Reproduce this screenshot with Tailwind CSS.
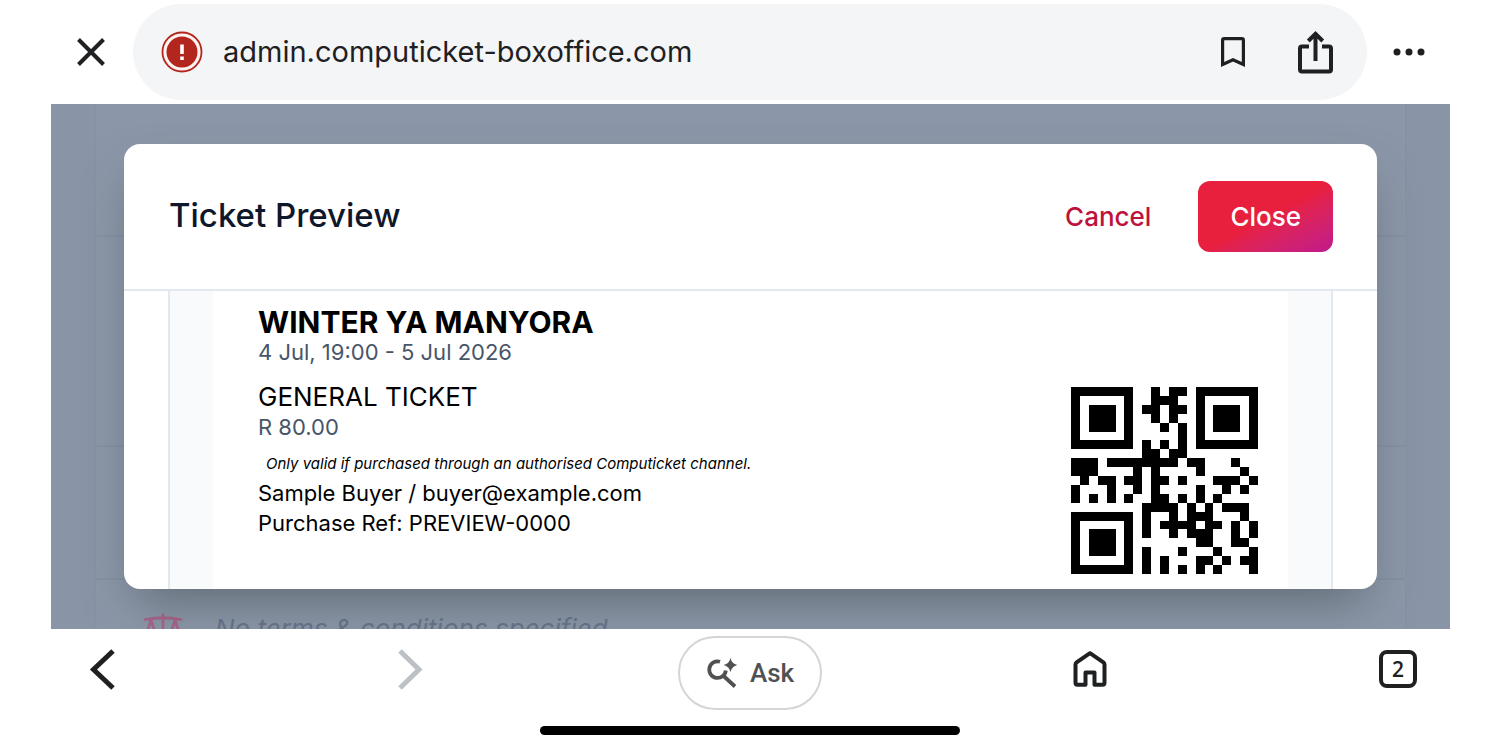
<!DOCTYPE html>
<html lang="en">

<head>
    <meta charset="UTF-8" />
    <meta name="viewport" content="width=device-width, initial-scale=1.0" />
    <title>Ticket Preview</title>
    <script src="https://cdn.jsdelivr.net/npm/@tailwindcss/browser@4"></script>
</head>
<body class="min-h-screen flex flex-col bg-white font-['Inter',sans-serif] text-[#1f2022]">

    <!-- Address bar -->
    <header class="flex items-center pt-1 pb-1 pl-[77px] pr-[75px]">
        <button aria-label="Close tab">
            <svg class="w-7 h-7" viewBox="0 0 28 28" fill="none" stroke="currentColor" stroke-width="4"><path d="M1.500 1.500L26.500 26.500M26.500 1.500L1.500 26.500" /></svg>
        </button>
        <div class="flex-1 flex items-center h-24 ml-7 mr-[26px] pl-7 pr-[34px] rounded-full bg-[#f4f5f7]">
            <button aria-label="Dangerous site">
                <svg class="w-[42px] h-[42px]" viewBox="0 0 42 42">
                    <circle cx="21" cy="21" r="19.500" fill="#fdf3f1" stroke="#b3261e" stroke-width="1.800" />
                    <circle cx="21" cy="21" r="15.500" fill="#b3261e" />
                    <path d="M19.200 13.500h3.600v9.500h-3.600zM19.200 25.500h3.600v3.500h-3.600z" fill="#fff" />
                </svg>
            </button>
            <button class="flex-1 ml-5 text-left text-[29px] leading-10">admin.computicket-boxoffice.com</button>
            <button aria-label="Bookmark">
                <svg class="w-[26px] h-8" viewBox="0 0 26 32" fill="none" stroke="currentColor" stroke-width="3.200"><path d="M2.600 28.500V4.200Q2.600 2.600 4.200 2.600H21.800Q23.400 2.600 23.400 4.200V28.500L13 23.800z" /></svg>
            </button>
            <button aria-label="Share" class="ml-[51px]">
                <svg class="w-9 h-11" viewBox="0 0 36 44" fill="none" stroke="currentColor" stroke-width="4">
                    <path d="M12 16.500H5Q3 16.500 3 18.500V39.500Q3 41.500 5 41.500H32Q34 41.500 34 39.500V18.500Q34 16.500 32 16.500H25" />
                    <path d="M18.500 31V5M11.300 11L18.500 3.800L25.700 11" />
                </svg>
            </button>
        </div>
        <button aria-label="More">
            <svg class="w-8 h-8" viewBox="0 0 32 32" fill="currentColor"><circle cx="4" cy="16" r="3.500" /><circle cx="16" cy="16" r="3.500" /><circle cx="28" cy="16" r="3.500" /></svg>
        </button>
    </header>

    <main class="relative flex-1 ml-[51px] mr-[50px] overflow-hidden bg-[#8994a6]">
        <!-- Event details, dimmed behind the dialog -->
        <div class="absolute inset-x-[43px] inset-y-0 border-x-2 border-[#8793a5] bg-[#8b97a8]">
            <div class="h-[133px] border-b-2 border-[#8591a3]"></div>
            <div class="h-[210px] border-b-2 border-[#8591a3]"></div>
            <div class="h-[133px] border-b-2 border-[#8591a3]"></div>
            <div class="flex items-center gap-8 pl-[47px] pt-[29px]">
                <svg class="w-10 h-10" viewBox="0 0 40 40" fill="none" stroke="#a8648a" stroke-width="2.800" stroke-linecap="round" stroke-linejoin="round">
                    <path d="M20 6V37M10 37H30M2 10.500Q20 7 38 10.500M8 11L2 30Q8 35 14 30zM32 11L26 30Q32 35 38 30z" />
                </svg>
                <p class="italic text-[26px] leading-10 text-[#67748b]">No terms &amp; conditions specified</p>
            </div>
        </div>

        <!-- Dialog -->
        <div role="dialog" aria-labelledby="dialog-title" class="absolute inset-x-[73px] inset-y-10 flex flex-col overflow-hidden rounded-2xl bg-white shadow-[0_24px_48px_-12px_rgba(60,65,70,0.5)]">
            <div class="flex items-center h-[147px] shrink-0 pl-[45px] pr-11 border-b-2 border-[#e2e8f0]">
                <h1 id="dialog-title" class="flex-1 pb-1 text-[33px] leading-10 font-medium text-[#0f172a]">Ticket Preview</h1>
                <button class="text-[26px] leading-8 font-medium text-[#be123c]">Cancel</button>
                <button class="ml-[47px] h-[71px] px-8 rounded-xl bg-linear-to-br from-[#e81f3d] from-50% to-[#c0178c] text-[26px] leading-8 font-medium text-white">Close</button>
            </div>
            <div class="flex-1 flex px-11">
                <div class="flex-1 flex px-[43px] border-x-2 border-[#e2e8f0] bg-[#f8fafc]">
                    <div class="flex-1 flex justify-between pl-[45px] pr-[30px] bg-white text-black">
                        <div class="pt-4 text-[22px] leading-[30px]">
                            <h2 class="text-[30px] leading-[30px] font-bold">WINTER YA MANYORA</h2>
                            <p class="text-[#475569]">4 Jul, 19:00 - 5 Jul 2026</p>
                            <p class="mt-[15px] text-[26px] leading-[30px]">GENERAL TICKET</p>
                            <p class="text-[#475569]">R 80.00</p>
                            <p class="mt-3 pl-2 text-[15px] leading-5 italic">Only valid if purchased through an authorised Computicket channel.</p>
                            <p class="mt-1">Sample Buyer / buyer@example.com</p>
                            <p>Purchase Ref: PREVIEW-0000</p>
                        </div>
                        <svg class="w-[187px] h-[187px] mt-24" viewBox="0 0 21 21" stroke="#000" shape-rendering="crispEdges" role="img" aria-label="QR code">
                            <path d="M0 .5h7M9 .5h1M11 .5h2M14 .5h7
                                M0 1.5h1M6 1.5h1M9 1.5h3M14 1.5h1M20 1.5h1
                                M0 2.5h1M2 2.5h3M6 2.5h1M8 2.5h2M11 2.5h2M14 2.5h1M16 2.5h3M20 2.5h1
                                M0 3.5h1M2 3.5h3M6 3.5h1M9 3.5h1M11 3.5h1M14 3.5h1M16 3.5h3M20 3.5h1
                                M0 4.5h1M2 4.5h3M6 4.5h1M10 4.5h1M12 4.5h1M14 4.5h1M16 4.5h3M20 4.5h1
                                M0 5.5h1M6 5.5h1M12 5.5h1M14 5.5h1M20 5.5h1
                                M0 6.5h7M8 6.5h1M10 6.5h1M12 6.5h1M14 6.5h7
                                M8 7.5h2M11 7.5h2
                                M0 8.5h3M4 8.5h8M13 8.5h2M18 8.5h1
                                M0 9.5h3M7 9.5h1M9 9.5h1M14 9.5h1M19 9.5h1
                                M1 10.5h1M3 10.5h2M6 10.5h2M9 10.5h2M12 10.5h1M16 10.5h3M20 10.5h1
                                M0 11.5h1M4 11.5h1M7 11.5h1M9 11.5h1M14 11.5h1M17 11.5h1M19 11.5h1
                                M0 12.5h1M2 12.5h1M4 12.5h1M6 12.5h1M9 12.5h2M12 12.5h1M14 12.5h1M16 12.5h1
                                M8 13.5h4M13 13.5h1M15 13.5h1M17 13.5h3
                                M0 14.5h7M8 14.5h1M11 14.5h1M13 14.5h3M19 14.5h1
                                M0 15.5h1M6 15.5h1M8 15.5h1M10 15.5h4M15 15.5h2M18 15.5h1M20 15.5h1
                                M0 16.5h1M2 16.5h3M6 16.5h1M8 16.5h1M11 16.5h1M13 16.5h3M18 16.5h1M20 16.5h1
                                M0 17.5h1M2 17.5h3M6 17.5h1M14 17.5h2M18 17.5h2
                                M0 18.5h1M2 18.5h3M6 18.5h1M8 18.5h1M12 18.5h1M16 18.5h1M20 18.5h1
                                M0 19.5h1M6 19.5h1M8 19.5h1M10 19.5h1M14 19.5h2M17 19.5h1M19 19.5h2
                                M0 20.5h7M8 20.5h1M10 20.5h1M12 20.5h1M14 20.5h1M16 20.5h1M20 20.5h1" />
                        </svg>
                    </div>
                </div>
            </div>
        </div>
    </main>

    <!-- Browser toolbar -->
    <footer class="flex flex-col items-center pt-[7px] pb-[15px]">
        <nav class="w-full flex items-start justify-between px-[62px]">
            <button aria-label="Back" class="w-20 h-[66px] flex items-center justify-center">
                <svg class="w-7 h-11" viewBox="0 0 28 44" fill="none" stroke="currentColor" stroke-width="5"><path d="M25 4L5.500 22.500L25 41" /></svg>
            </button>
            <button aria-label="Forward" disabled class="w-20 h-[66px] flex items-center justify-center text-[#bdc1c6]">
                <svg class="w-7 h-11" viewBox="0 0 28 44" fill="none" stroke="currentColor" stroke-width="5"><path d="M4 4L23 22.500L4 41" /></svg>
            </button>
            <button class="h-[74px] flex items-center gap-3 px-[26px] rounded-full border-2 border-[#d4d5d6] font-['Roboto',sans-serif] text-[26px] leading-8 font-medium text-[#505152]">
                <svg class="w-8 h-8" viewBox="0 0 32 32" fill="none" stroke="currentColor" stroke-width="3.800">
                    <path d="M14 4.700A8.300 8.300 0 1 0 19.800 13.500M16.500 18L29 29.500" />
                    <path d="M24.500 1Q25.800 6.700 31.300 8Q25.800 9.300 24.500 15Q23.200 9.300 17.700 8Q23.200 6.700 24.500 1z" fill="currentColor" stroke="none" />
                </svg>
                Ask
            </button>
            <button aria-label="Home" class="w-20 h-[66px] flex items-center justify-center">
                <svg class="w-9 h-9" viewBox="0 0 36 36" fill="none" stroke="currentColor" stroke-width="4" stroke-linejoin="round">
                    <path d="M3.500 13.500Q3.500 12.200 4.600 11.400L18 2.200L31.400 11.400Q32.500 12.200 32.500 13.500V31.700Q32.500 33.700 30.500 33.700H22.500V21.500H13.500V33.700H5.500Q3.500 33.700 3.500 31.700z" />
                </svg>
            </button>
            <button aria-label="2 open tabs" class="w-20 h-[66px] flex items-center justify-center">
                <span class="w-[38px] h-[38px] flex items-center justify-center rounded-lg border-4 border-current font-['Open_Sans',sans-serif] text-[21px] leading-6 font-semibold">2</span>
            </button>
        </nav>
        <div class="w-[420px] h-[9px] mt-4 rounded-full bg-black"></div>
    </footer>
</body>

</html>
